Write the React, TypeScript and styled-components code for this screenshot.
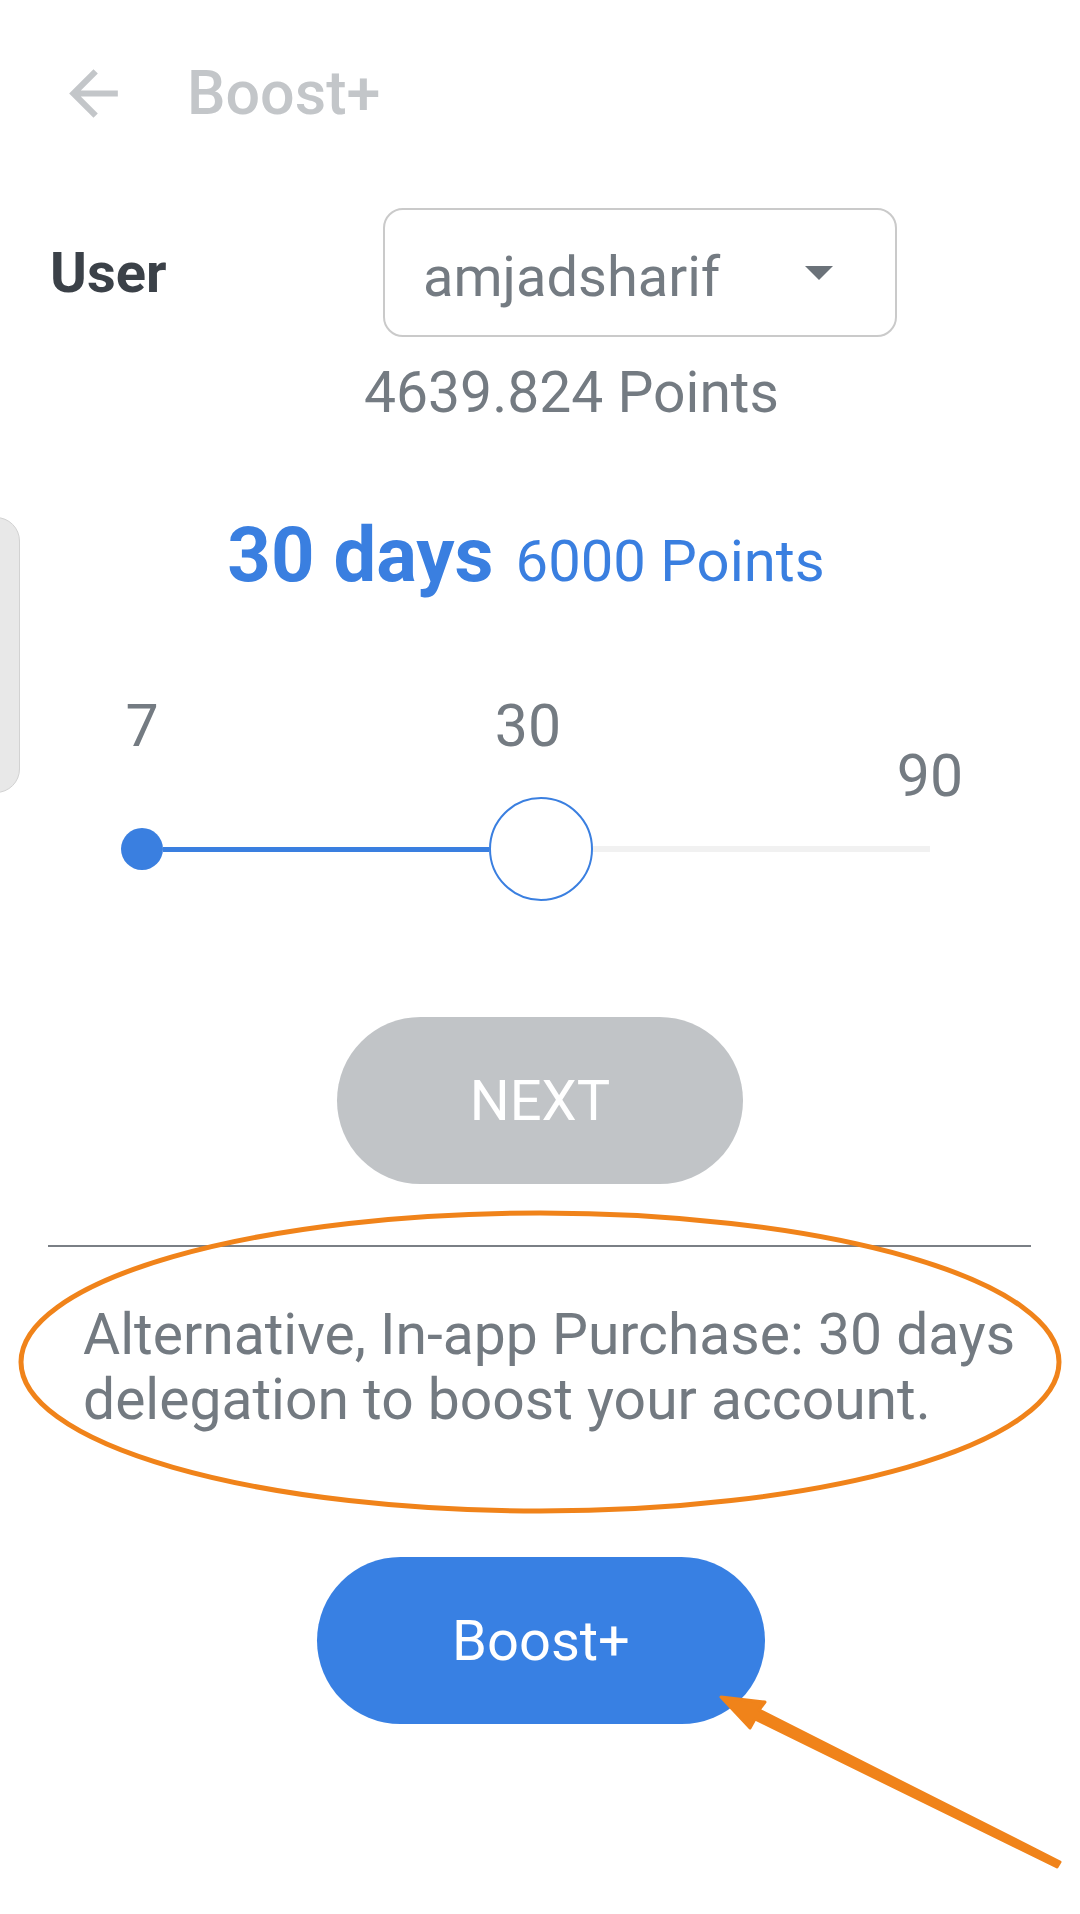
import React from "react";
import styled, { createGlobalStyle } from "styled-components";

const GlobalStyle = createGlobalStyle`
  html, body { margin: 0; padding: 0; background: #ffffff; }
  body { font-family: Roboto, "Noto Sans", Arial, sans-serif; }
  * { box-sizing: border-box; }
`;

const Page = styled.div`
  position: relative;
  width: 1080px;
  min-height: 1914px;
  background: #ffffff;
  overflow: hidden;
  display: flex;
  flex-direction: column;
`;

const Header = styled.header`
  height: 186px;
  display: flex;
  align-items: center;
  padding-left: 57px;
  gap: 57px;
`;

const HeaderTitle = styled.h1`
  margin: 0;
  font-size: 61px;
  font-weight: 500;
  color: #c3c6c9;
  line-height: 1;
`;

const UserRow = styled.div`
  margin-top: 22px;
  display: flex;
  align-items: center;
  padding-left: 50px;
`;

const UserLabel = styled.div`
  width: 333px;
  font-size: 56px;
  font-weight: 700;
  color: #3b4148;
`;

const Select = styled.div`
  width: 514px;
  height: 129px;
  border: 2px solid #cacaca;
  border-radius: 20px;
  display: flex;
  align-items: center;
  justify-content: space-between;
  padding: 8px 62px 0 38px;
  font-size: 56px;
  color: #747b82;
`;

const Caret = styled.span`
  width: 0;
  height: 0;
  border-left: 14px solid transparent;
  border-right: 14px solid transparent;
  border-top: 14px solid #6b7279;
  margin-top: -8px;
`;

const Balance = styled.div`
  margin-top: 23px;
  padding-left: 364px;
  font-size: 57px;
  line-height: 66px;
  color: #747b82;
`;

const Title = styled.div`
  margin-top: 84px;
  display: flex;
  justify-content: center;
  align-items: baseline;
  gap: 22px;
  padding-right: 28px;
  color: #3a7fe0;
`;

const Days = styled.span`
  font-size: 76px;
  font-weight: 700;
`;

const Cost = styled.span`
  font-size: 58px;
`;

const Labels = styled.div`
  margin-top: 92px;
  margin-left: 142px;
  width: 788px;
  height: 105px;
  display: flex;
  justify-content: space-between;
  align-items: flex-start;
`;

const Tick = styled.div<{ $drop?: boolean; $nudge?: boolean }>`
  width: 0;
  display: flex;
  justify-content: center;
  margin-top: ${(p) => (p.$drop ? "50px" : "0")};
  margin-right: ${(p) => (p.$nudge ? "16px" : "0")};
  font-size: 59px;
  line-height: 68px;
  color: #747b82;
  white-space: nowrap;
`;

const Track = styled.div`
  margin-left: 121px;
  width: 809px;
  height: 104px;
  display: flex;
  align-items: center;
`;

const Dot = styled.span`
  width: 42px;
  height: 42px;
  border-radius: 50%;
  background: #3a7fe0;
  flex-shrink: 0;
`;

const FilledLine = styled.span`
  flex: 0 0 326px;
  height: 5px;
  background: #3a7fe0;
`;

const RestLine = styled.span`
  flex: 1;
  height: 6px;
  background: #f1f1f1;
`;

const Thumb = styled.span`
  width: 104px;
  height: 104px;
  border-radius: 50%;
  border: 2px solid #3a7fe0;
  background: #ffffff;
  flex-shrink: 0;
`;

const PillButton = styled.button<{ $primary?: boolean }>`
  align-self: center;
  width: ${(p) => (p.$primary ? "448px" : "406px")};
  height: 167px;
  border: none;
  border-radius: 84px;
  background: ${(p) => (p.$primary ? "#3880e3" : "#c1c4c7")};
  color: #ffffff;
  font-family: Roboto, Arial, sans-serif;
  font-size: 56px;
  font-weight: 400;
  padding: 0;
`;

const NextButton = styled(PillButton)`
  margin-top: 116px;
`;

const BoostButton = styled(PillButton)`
  margin-top: 125px;
  margin-left: 2px;
`;

const Divider = styled.hr`
  margin: 61px 49px 0 48px;
  border: none;
  height: 2px;
  background: #7a7f85;
`;

const Note = styled.p`
  margin: 55px 40px 0 83px;
  font-size: 57px;
  line-height: 65px;
  color: #737a81;
`;

const DrawerTab = styled.div`
  position: absolute;
  left: -30px;
  top: 517px;
  width: 50px;
  height: 276px;
  border-radius: 24px;
  background: #e8e8e8;
  border: 1px solid #d2d2d2;
`;

const Annotation = styled.svg`
  position: absolute;
  left: 0;
  top: 0;
  pointer-events: none;
`;

export default function App() {
  return (
    <>
      <GlobalStyle />
      <Page>
        <DrawerTab />
        <Header>
          <svg width="73" height="73" viewBox="0 0 24 24" fill="#c3c6c9">
            <path d="M20 11H7.83l5.59-5.59L12 4l-8 8 8 8 1.41-1.41L7.83 13H20v-2z" />
          </svg>
          <HeaderTitle>Boost+</HeaderTitle>
        </Header>
        <UserRow>
          <UserLabel>User</UserLabel>
          <Select>
            <span>amjadsharif</span>
            <Caret />
          </Select>
        </UserRow>
        <Balance>4639.824 Points</Balance>
        <Title>
          <Days>30 days</Days>
          <Cost>6000 Points</Cost>
        </Title>
        <Labels>
          <Tick>7</Tick>
          <Tick $nudge>30</Tick>
          <Tick $drop>90</Tick>
        </Labels>
        <Track>
          <Dot />
          <FilledLine />
          <Thumb />
          <RestLine />
        </Track>
        <NextButton>NEXT</NextButton>
        <Divider />
        <Note>Alternative, In-app Purchase: 30 days delegation to boost your account.</Note>
        <BoostButton $primary>Boost+</BoostButton>
        <Annotation width="1080" height="1914" viewBox="0 0 1080 1914">
          <ellipse cx="540" cy="1362" rx="519" ry="149" fill="none" stroke="#f0831a" strokeWidth="5" />
          <polygon
            points="721,1697 765,1702 759,1710 1060,1862 1057,1867 755,1719 750,1728"
            fill="#f0831a"
            stroke="#f0831a"
            strokeWidth="3"
            strokeLinejoin="round"
          />
        </Annotation>
      </Page>
    </>
  );
}
